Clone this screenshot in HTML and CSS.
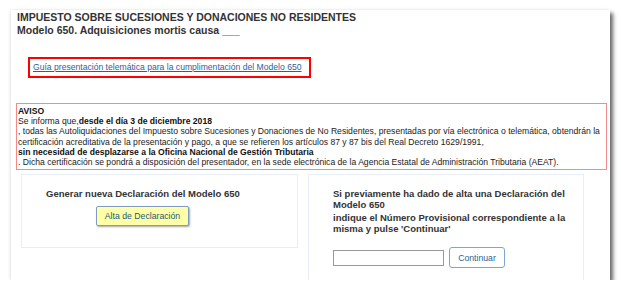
FILE: index.html
```html
<!DOCTYPE html>
<html lang="es">
<head>
    <meta charset="UTF-8">
    <title>Modelo 650</title>
    <link rel="stylesheet" href="styles.css">
</head>
<body>
    <div class="panel">
        <div class="titulo">
            <p>IMPUESTO SOBRE SUCESIONES Y DONACIONES NO RESIDENTES</p>
            <p>Modelo 650. Adquisiciones mortis causa ___</p>
        </div>
        <div class="guia">
            <a href="#">Guía presentación telemática para la cumplimentación del Modelo 650</a>
        </div>
        <div class="aviso">
            <strong>AVISO</strong><br>
            Se informa que,<strong>desde el día 3 de diciembre 2018</strong><br>
            , todas las Autoliquidaciones del Impuesto sobre Sucesiones y Donaciones de No Residentes, presentadas por vía electrónica o telemática, obtendrán la certificación acreditativa de la presentación y pago, a que se refieren los artículos 87 y 87 bis del Real Decreto 1629/1991,<br>
            <strong>sin necesidad de desplazarse a la Oficina Nacional de Gestión Tributaria</strong><br>
            . Dicha certificación se pondrá a disposición del presentador, en la sede electrónica de la Agencia Estatal de Administración Tributaria (AEAT).
        </div>
        <div class="opciones">
            <div class="caja nueva">
                <h2>Generar nueva Declaración del Modelo 650</h2>
                <button class="btn-alta">Alta de Declaración</button>
            </div>
            <div class="caja previa">
                <p>Si previamente ha dado de alta una Declaración del Modelo 650</p>
                <p>indique el Número Provisional correspondiente a la misma y pulse 'Continuar'</p>
                <div class="fila">
                    <input type="text" class="numero">
                    <button class="btn-continuar">Continuar</button>
                </div>
            </div>
        </div>
    </div>
</body>
</html>
```

FILE: styles.css
```css
body {
    margin: 0;
    background: #fff;
    font-family: "Liberation Sans", Arial, sans-serif;
    color: #333;
}
.panel {
    margin: 10px 0 0 11px;
    width: 599px;
    height: 270px;
    overflow: hidden;
    background: #fff;
    box-shadow: 3px 3px 4px rgba(0, 0, 0, 0.6), -1px 0 3px rgba(0, 0, 0, 0.08);
}
.titulo {
    padding: 1px 0 0 6px;
}
.titulo p {
    margin: 0;
    font-size: 10.5px;
    font-weight: bold;
    line-height: 12.5px;
    color: #333;
}
.guia {
    margin: 21px 0 0 17px;
    width: 276px;
    height: 17px;
    border: 2px solid #f00;
    padding-left: 3px;
    font-size: 8.6px;
    line-height: 17px;
}
.guia a {
    color: #2e5e9e;
}
.aviso {
    margin: 25px 3px 0 5px;
    border: 1px solid #f28b8b;
    padding: 2px 1px 2px 1px;
    font-size: 8.6px;
    line-height: 10.2px;
    color: #222;
}
.aviso strong {
    color: #111;
}
.opciones {
    display: flex;
    gap: 10px;
    margin: 4px 0 0 10px;
}
.caja {
    border: 1px solid #e8eef5;
}
.nueva {
    width: 275px;
    height: 72px;
}
.nueva h2 {
    margin: 13px 0 0 24px;
    font-size: 9.5px;
    color: #333;
}
.btn-alta {
    display: block;
    margin: 7px 0 0 74px;
    width: 93px;
    height: 20px;
    background: #ffffa8;
    border: 1px solid #7f9cc0;
    border-radius: 2px;
    box-shadow: 1px 1px 2px rgba(0, 0, 0, 0.35);
    font-family: "Liberation Sans", Arial, sans-serif;
    font-size: 8.7px;
    color: #235a73;
    padding: 0;
}
.previa {
    width: 276px;
    height: 120px;
    border-bottom: none;
    padding: 13px 0 0 24px;
    box-sizing: border-box;
}
.previa p {
    margin: 0 0 2px;
    font-size: 9.5px;
    font-weight: bold;
    line-height: 11px;
    width: 240px;
}
.fila {
    display: flex;
    align-items: center;
    gap: 5px;
    margin-top: 13px;
}
.numero {
    width: 111px;
    height: 16px;
    border: 1px solid #999;
    box-sizing: border-box;
    padding: 0;
}
.btn-continuar {
    width: 56px;
    height: 21px;
    background: #fff;
    border: 1px solid #7ea6d3;
    border-radius: 3px;
    font-family: "Liberation Sans", Arial, sans-serif;
    font-size: 8.7px;
    color: #2f5f8f;
    padding: 0;
}
```
